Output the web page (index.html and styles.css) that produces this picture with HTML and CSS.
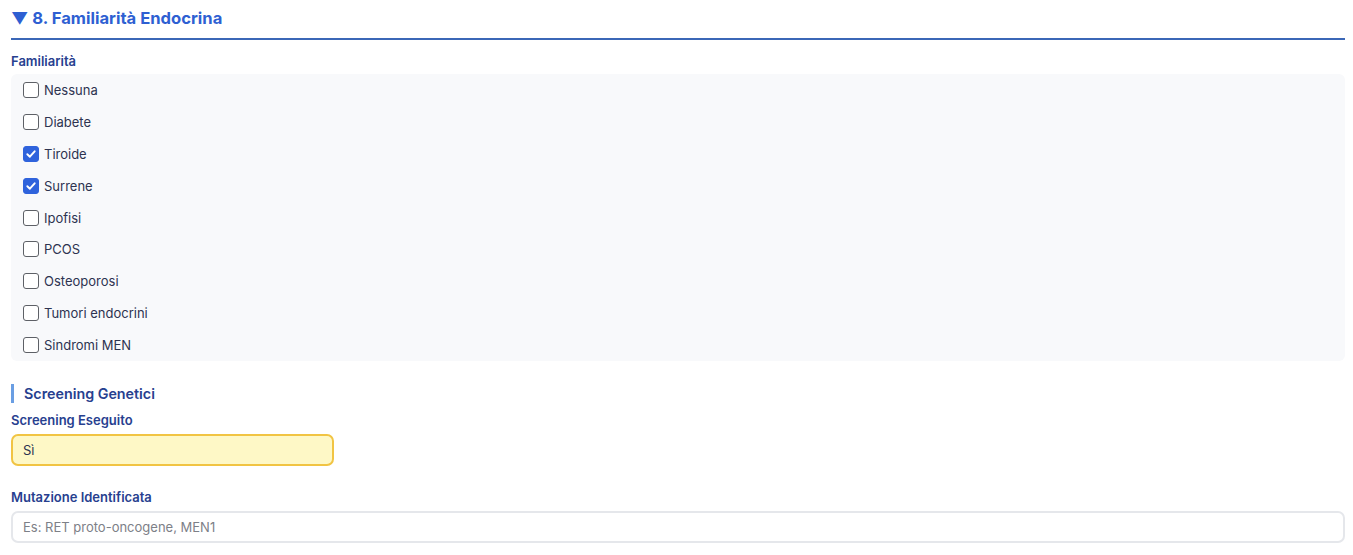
FILE: index.html
```html
<!DOCTYPE html>
<html lang="it">
<head>
<meta charset="utf-8">
<title>Familiarità Endocrina</title>
<link rel="stylesheet" href="styles.css">
</head>
<body>
<section class="section">
  <h2 class="section-title">▼ 8. Familiarità Endocrina</h2>

  <div class="field">
    <div class="label">Familiarità</div>
    <div class="checklist">
      <label class="check-row"><span class="box"></span><span>Nessuna</span></label>
      <label class="check-row"><span class="box"></span><span>Diabete</span></label>
      <label class="check-row"><span class="box checked"><svg viewBox="0 0 16 16"><path d="M3.8 8.3 L6.7 11.1 L12.2 4.9" /></svg></span><span>Tiroide</span></label>
      <label class="check-row"><span class="box checked"><svg viewBox="0 0 16 16"><path d="M3.8 8.3 L6.7 11.1 L12.2 4.9" /></svg></span><span>Surrene</span></label>
      <label class="check-row"><span class="box"></span><span>Ipofisi</span></label>
      <label class="check-row"><span class="box"></span><span>PCOS</span></label>
      <label class="check-row"><span class="box"></span><span>Osteoporosi</span></label>
      <label class="check-row"><span class="box"></span><span>Tumori endocrini</span></label>
      <label class="check-row"><span class="box"></span><span>Sindromi MEN</span></label>
    </div>
  </div>

  <h3 class="subhead">Screening Genetici</h3>

  <div class="field tight">
    <div class="label">Screening Eseguito</div>
    <div class="select highlight">Sì</div>
  </div>

  <div class="field spaced">
    <div class="label">Mutazione Identificata</div>
    <div class="input placeholder">Es: RET proto-oncogene, MEN1</div>
  </div>
</section>
</body>
</html>
```

FILE: styles.css
```css
* { box-sizing: border-box; }
html, body { margin: 0; padding: 0; background: #ffffff; }
body {
  font-family: Inter, "Noto Sans", "Liberation Sans", sans-serif;
  color: #2d3350;
}
.section {
  padding: 6px 8px 0 11px;
}
.section-title {
  margin: 0;
  font-size: 16.6px;
  line-height: 24px;
  font-weight: 700;
  color: #2e5fd2;
  padding-bottom: 8px;
  border-bottom: 2px solid #3b67b7;
}
.field { margin-top: 13px; }
.field.tight { margin-top: 9px; }
.field.spaced { margin-top: 23px; }
.label {
  font-size: 13px;
  line-height: 16px;
  font-weight: 600;
  color: #27408f;
  margin-bottom: 5px;
}
.field.tight .label, .field.spaced .label { margin-bottom: 6px; }
.checklist {
  background: #f8f9fb;
  border-radius: 6px;
  display: flex;
  flex-direction: column;
}
.check-row {
  display: flex;
  align-items: center;
  gap: 5px;
  height: 31.9px;
  padding-left: 12px;
  font-size: 13px;
  color: #2d3350;
}
.box {
  width: 16px;
  height: 16px;
  border: 1px solid #5d6066;
  border-radius: 3px;
  background: #ffffff;
  display: flex;
  align-items: center;
  justify-content: center;
  flex: none;
}
.box.checked {
  background: #2f63dc;
  border-color: #2f63dc;
}
.box svg { width: 16px; height: 16px; }
.box svg path {
  fill: none;
  stroke: #ffffff;
  stroke-width: 2.2;
  stroke-linecap: round;
  stroke-linejoin: round;
}
.subhead {
  margin: 23px 0 0 0;
  border-left: 3px solid #6a9ee3;
  padding-left: 10px;
  font-size: 14.3px;
  line-height: 19px;
  font-weight: 600;
  color: #27408f;
}
.select, .input {
  height: 32px;
  border-radius: 7px;
  border: 2px solid #e5e7eb;
  display: flex;
  align-items: center;
  padding-left: 10px;
  font-size: 13px;
}
.select.highlight {
  width: 323px;
  background: #fef8c6;
  border-color: #f1c443;
  color: #2d3350;
}
.input.placeholder { color: #7d8087; background: #ffffff; }
```
